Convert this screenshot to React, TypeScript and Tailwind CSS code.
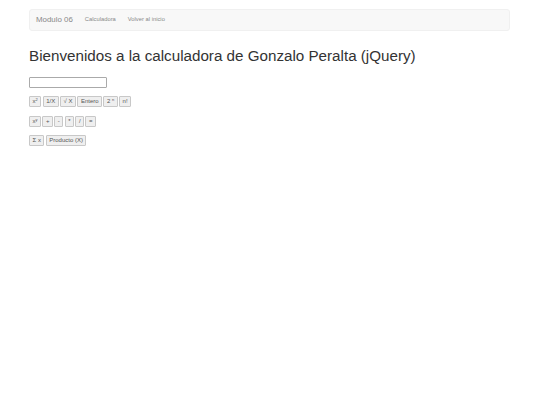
const btn =
  'h-[9px] box-content px-[2.5px] rounded-[1px] border border-[#c8c8c8] bg-[#efefef] text-[6px] leading-[9px] text-[#555] whitespace-nowrap';

function Calc({ label }: { label: React.ReactNode }) {
  return <button className={btn}>{label}</button>;
}

const sup = (base: string, exp: string) => (
  <>
    {base}
    <sup className="text-[4px]">{exp}</sup>
  </>
);

export default function App() {
  return (
    <div className="min-h-[405px] bg-white font-['Liberation_Sans',sans-serif] text-[#333]">
      <div className="ml-[29px] w-[481px] pt-[9px]">
        <nav className="flex h-[22px] items-center rounded-[3px] border border-[#f0f0f0] bg-[#f8f8f8] px-[6px] pb-[1px] text-[#888]">
          <span className="text-[7.9px]">Modulo 06</span>
          <span className="ml-[12px] text-[5.8px]">Calculadora</span>
          <span className="ml-[12px] text-[5.8px]">Volver al inicio</span>
        </nav>

        <h1 className="mt-[15px] text-[15.2px] leading-[20px] font-normal text-[#333]">
          Bienvenidos a la calculadora de Gonzalo Peralta (jQuery)
        </h1>

        <input
          type="text"
          className="mt-[11px] block h-[9px] w-[76px] box-content rounded-[1px] border border-[#aaa] bg-white"
        />

        <div className="mt-[8px] flex gap-[1.4px]">
          <Calc label={sup('x', '2')} />
          <Calc label="1/X" />
          <Calc label="√ X" />
          <Calc label="Entero" />
          <Calc label={sup('2 ', 'n')} />
          <Calc label="n!" />
        </div>

        <div className="mt-[8.5px] flex gap-[1.4px]">
          <Calc label={sup('x', 'y')} />
          <Calc label="+" />
          <Calc label="-" />
          <Calc label="*" />
          <Calc label="/" />
          <Calc label="=" />
        </div>

        <div className="mt-[8.5px] flex gap-[1.4px]">
          <Calc label="Σ x" />
          <Calc label="Producto (X)" />
        </div>
      </div>
    </div>
  );
}
